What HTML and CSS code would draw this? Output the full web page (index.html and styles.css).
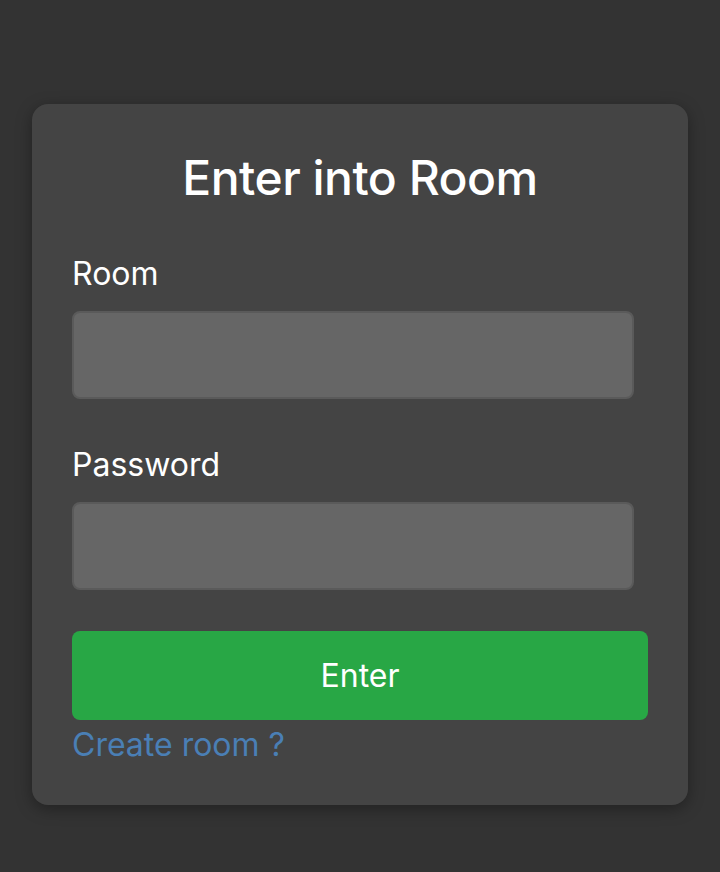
FILE: index.html
```html
<!DOCTYPE html>
<html>
<head>
<meta charset="utf-8">
<link rel="stylesheet" href="styles.css">
</head>
<body>
<div class="page">
  <form class="card">
    <h1 class="title">Enter into Room</h1>
    <label class="label">Room</label>
    <input class="field" type="text">
    <label class="label label-second">Password</label>
    <input class="field" type="password">
    <button class="btn" type="button">Enter</button>
    <a class="link" href="#">Create room ?</a>
  </form>
</div>
</body>
</html>
```
FILE: styles.css
```css
html, body {
  margin: 0;
  padding: 0;
  background: #333333;
  height: 100%;
}
body {
  font-family: Inter, "Noto Sans", sans-serif;
  color: #ffffff;
}
.page {
  padding: 104px 32px 0;
}
.card {
  background: #444444;
  border-radius: 16px;
  padding: 40px 40px 41px;
  display: flex;
  flex-direction: column;
  box-shadow: 0 4px 16px rgba(0,0,0,0.35);
}
.title {
  margin: 4px 0 0;
  font-size: 48px;
  font-weight: 500;
  line-height: 59px;
  text-align: center;
  letter-spacing: -0.5px;
}
.label {
  margin-top: 47px;
  font-size: 32px;
  line-height: 39px;
}
.label-second {
  margin-top: 46px;
}
.field {
  margin-top: 18px;
  width: 562px;
  height: 88px;
  box-sizing: border-box;
  background: #666666;
  border: 2px solid #5a5a5a;
  border-radius: 8px;
  outline: none;
}
.btn {
  margin-top: 41px;
  height: 89px;
  width: 100%;
  background: #28a745;
  border: none;
  border-radius: 8px;
  color: #ffffff;
  font-family: Inter, "Noto Sans", sans-serif;
  font-size: 32px;
}
.link {
  font-size: 32px;
  line-height: 39px;
  color: #4a7fb5;
  text-decoration: none;
  margin-top: 5px;
}
```
